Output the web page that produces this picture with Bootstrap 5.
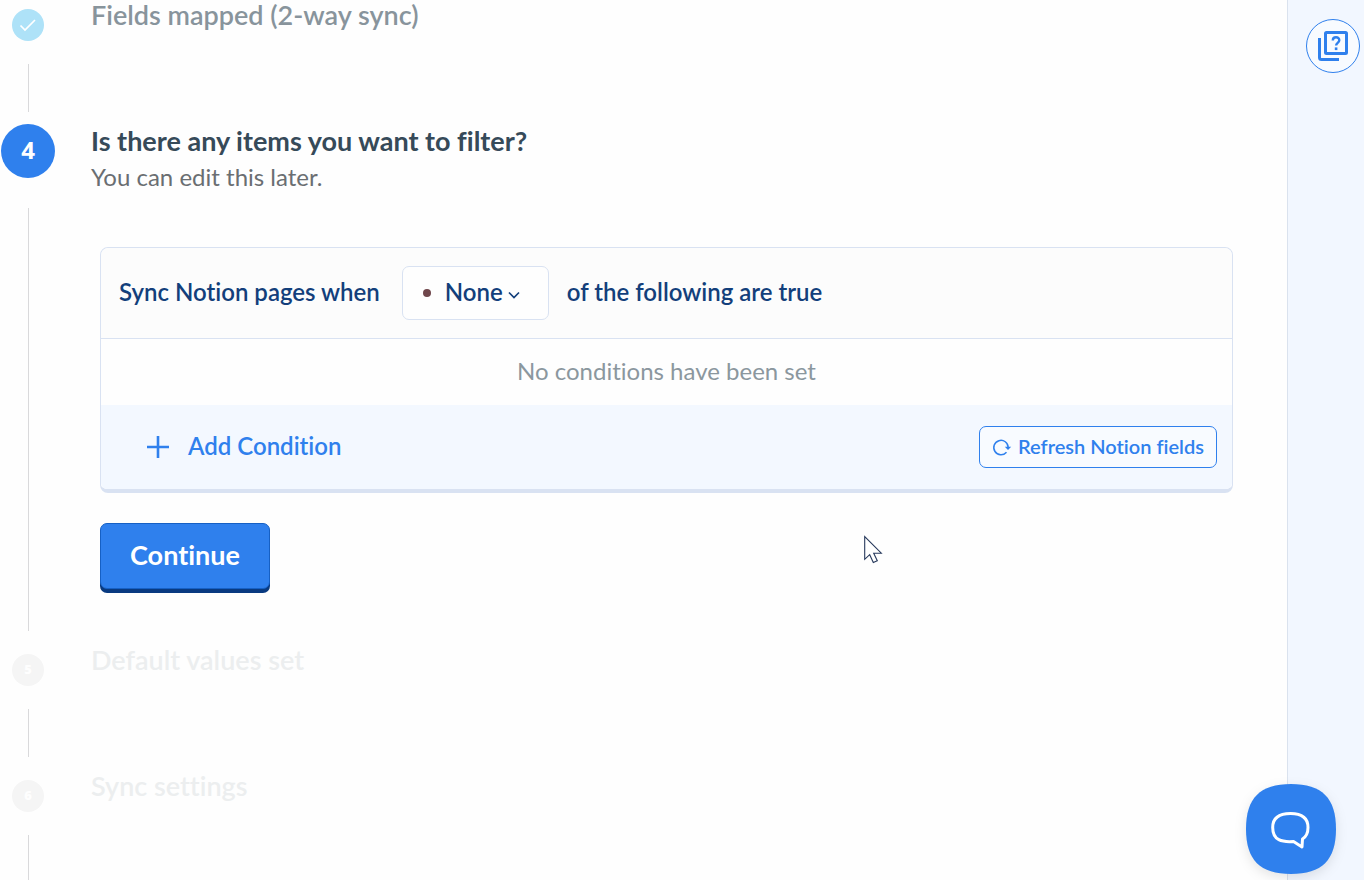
<!DOCTYPE html>
<html lang="en">
<head>
<meta charset="utf-8">
<meta name="viewport" content="width=device-width, initial-scale=1">
<title>Sync setup</title>
<link href="https://cdn.jsdelivr.net/npm/bootstrap@5.3.0/dist/css/bootstrap.min.css" rel="stylesheet">
<style>
  :root { --brand: #2f80ed; --navy: #133f7b; --line: #d9e2f2; }
  body { background: #fefefe; font-family: Lato, "Open Sans", sans-serif; color: #364a59; }
  body, .btn, select { font-variant-ligatures: none; }
  .shell { height: 100vh; }
  .rail { width: 56px; }
  .stem { width: 1px; background: #d9d9db; }
  .dot-step, .dot-now { font-family: "Open Sans", sans-serif; }
  .dot-step { width: 32px; height: 32px; font-size: 13px; font-weight: 800; }
  .dot-done { background: #aee2f8; }
  .dot-todo { background: #f5f5f5; color: #fefefe; }
  .dot-now { width: 54px; height: 54px; background: var(--brand); font-size: 24px; line-height: 32px; font-weight: 700; padding-bottom: 2px; }
  .step-first { height: 112px; padding-top: 9px; }
  .step-now { height: 519px; padding-top: 12px; }
  .step-todo { height: 126px; padding-top: 23px; }
  .step-title { font-size: 27px; line-height: 30px; font-weight: 600; margin: -9px 0 0; }
  .step-now .step-title { margin-top: 2px; }
  .step-last { height: auto; }
  .text-done { color: #88949c; }
  .text-todo { color: #eceeef; }
  .step-note { font-size: 24px; line-height: 32px; color: #6a6e72; margin-top: 5px; }
  .stem-gap { margin-top: 23px; }
  .stem-gap-lg { margin-top: 30px; }
  .body-col { padding-left: 35px; padding-right: 54px; }
  .filter-box { border: 1px solid var(--line); border-bottom-width: 4px; border-radius: 8px; margin: 54px 0 0 9px; }
  .filter-head { height: 91px; background: #fcfcfc; border-bottom: 1px solid var(--line); padding: 0 18px; gap: 18px; color: var(--navy); font-size: 24px; font-weight: 600; border-radius: 8px 8px 0 0; }
  .filter-head label, .filter-head > span, .filter-none { padding-bottom: 2px; }
  .picker { width: 147px; height: 54px; border: 1px solid var(--line); border-radius: 7px; background: #fefefe; padding-left: 20px; }
  .picker select { appearance: none; border: 0; background: transparent; color: inherit; font-weight: 600; padding: 0 0 2px; margin-left: 14px; margin-right: 5px; }
  .bullet { width: 8px; height: 8px; background: #6f464b; }
  .filter-none { height: 66px; font-size: 24px; color: #8b979e; }
  .filter-foot { height: 84px; background: #f3f8ff; padding: 0 15px 0 46px; border-radius: 0 0 6px 6px; }
  .btn-add { color: var(--brand); font-size: 24px; font-weight: 600; gap: 19px; }
  .btn-fields { width: 238px; height: 42px; border: 1px solid var(--brand); border-radius: 7px; color: var(--brand); font-size: 20px; font-weight: 600; gap: 6px; background: #f8fbff; }
  .btn-add span, .btn-fields span { padding-bottom: 2px; }
  .btn-go { width: 170px; height: 66px; margin: 30px 0 0 9px; padding: 0 0 2px; background: var(--brand); border: 1px solid #1660c4; border-radius: 7px; box-shadow: 0 4px 0 #093a80; color: #fff; font-size: 27px; font-weight: 700; }
  .side { width: 77px; background: #f2f7ff; border-left: 1px solid #dae2ee; padding: 19px 4px 0 0; }
  .btn-help { width: 54px; height: 54px; border: 1px solid var(--brand); background: #f8fbff; }
  .btn-chat { position: fixed; right: 28px; bottom: 6px; width: 90px; height: 90px; filter: drop-shadow(0 4px 6px rgba(0,0,0,.1)); }
  .pointer { position: fixed; left: 864px; top: 535px; pointer-events: none; }
</style>
</head>
<body>
<div class="shell d-flex overflow-hidden">
  <main class="flex-grow-1 d-flex flex-column">
    <section class="step-first d-flex flex-shrink-0">
      <div class="rail d-flex flex-column align-items-center flex-shrink-0">
        <span class="dot-step dot-done rounded-circle d-flex align-items-center justify-content-center">
          <svg width="18" height="16" viewBox="0 0 18 16" fill="none" stroke="#fff" stroke-width="1.7" aria-hidden="true"><path d="M1.5 8.5 6 13 16 3"/></svg>
        </span>
        <span class="stem stem-gap flex-grow-1"></span>
      </div>
      <div class="body-col flex-grow-1"><h2 class="step-title text-done">Fields mapped (2-way sync)</h2></div>
    </section>

    <section class="step-now d-flex flex-shrink-0">
      <div class="rail d-flex flex-column align-items-center flex-shrink-0">
        <span class="dot-now rounded-circle text-white d-flex align-items-center justify-content-center">4</span>
        <span class="stem stem-gap-lg flex-grow-1"></span>
      </div>
      <div class="body-col flex-grow-1">
        <h2 class="step-title fw-bold">Is there any items you want to filter?</h2>
        <p class="step-note mb-0">You can edit this later.</p>
        <div class="filter-box">
          <div class="filter-head d-flex align-items-center">
            <label for="match" class="me-1">Sync Notion pages when</label>
            <div class="picker d-flex align-items-center">
              <span class="bullet rounded-circle"></span>
              <select id="match"><option>None</option><option>Any</option><option>All</option></select>
              <svg width="12" height="8" viewBox="0 0 12 8" fill="none" stroke="#133f7b" stroke-width="1.7" class="mt-1" aria-hidden="true"><path d="m1 1.500 5 5 5-5"/></svg>
            </div>
            <span>of the following are true</span>
          </div>
          <div class="filter-none d-flex align-items-center justify-content-center">No conditions have been set</div>
          <div class="filter-foot d-flex align-items-center justify-content-between">
            <button type="button" class="btn-add btn p-0 border-0 d-flex align-items-center">
              <svg width="22" height="22" viewBox="0 0 22 22" stroke="currentColor" stroke-width="2.6" aria-hidden="true"><path d="M0 11h22M11 0v22"/></svg>
              <span>Add Condition</span>
            </button>
            <button type="button" class="btn-fields btn p-0 d-flex align-items-center justify-content-center">
              <svg width="20" height="18" viewBox="0 0 20 18" fill="none" stroke="currentColor" stroke-width="1.5" aria-hidden="true"><path d="M14.500 14.200A7.200 7.200 0 1 1 16.200 9.500"/><path d="M12.800 8.700h6.400l-3.200 3.400z" fill="currentColor" stroke="none"/></svg>
              <span>Refresh Notion fields</span>
            </button>
          </div>
        </div>
        <button type="button" class="btn-go btn">Continue</button>
      </div>
    </section>

    <section class="step-todo d-flex flex-shrink-0">
      <div class="rail d-flex flex-column align-items-center flex-shrink-0">
        <span class="dot-step dot-todo rounded-circle d-flex align-items-center justify-content-center">5</span>
        <span class="stem stem-gap flex-grow-1"></span>
      </div>
      <div class="body-col flex-grow-1"><h2 class="step-title text-todo">Default values set</h2></div>
    </section>

    <section class="step-todo step-last d-flex flex-grow-1">
      <div class="rail d-flex flex-column align-items-center flex-shrink-0">
        <span class="dot-step dot-todo rounded-circle d-flex align-items-center justify-content-center">6</span>
        <span class="stem stem-gap flex-grow-1"></span>
      </div>
      <div class="body-col flex-grow-1"><h2 class="step-title text-todo">Sync settings</h2></div>
    </section>
  </main>

  <aside class="side d-flex flex-shrink-0 justify-content-end align-items-start">
    <button type="button" class="btn-help btn p-0 rounded-circle d-flex align-items-center justify-content-center" aria-label="Help">
      <svg width="30" height="30" viewBox="0 0 30 30" fill="none" stroke="#2f80ed" stroke-width="3" aria-hidden="true"><path d="M1.500 7v19.500a2 2 0 0 0 2 2H21"/><rect x="7.500" y="1.500" width="21" height="21" rx="1"/><path d="M14.800 9.400c0-4.200 6.500-4.100 6.500-.2 0 2.700-3.200 2.700-3.200 5.300" stroke-width="2.400"/><path d="M18.100 16.400v2.700" stroke-width="2.600"/></svg>
    </button>
  </aside>
</div>

<button type="button" class="btn-chat btn p-0 border-0" aria-label="Open chat">
  <svg class="d-block" width="90" height="90" viewBox="0 0 90 90" aria-hidden="true">
    <path fill="#2f80ed" d="M45 0C76 0 90 14 90 45S76 90 45 90 0 76 0 45 14 0 45 0Z"/>
    <path fill="none" stroke="#fff" stroke-width="3" stroke-linejoin="round" d="M44.500 29.500C55 29.500 62 33 62 43.500c0 5-1.500 9-5.500 11.500L56 63l-8.500-5.500c-11.500.8-20.800-1-20.800-14C26.700 33 34 29.500 44.500 29.500Z"/>
  </svg>
</button>

<svg class="pointer" width="20" height="30" viewBox="0 0 20 30" aria-hidden="true"><path d="M.7 1.500v22.800l5-4.600 3.600 7.800 4-1.800-3.600-7.500h7.600Z" fill="#fff" stroke="#27395c" stroke-width="1.100"/></svg>
<script src="https://cdn.jsdelivr.net/npm/bootstrap@5.3.0/dist/js/bootstrap.bundle.min.js"></script>
</body>
</html>
